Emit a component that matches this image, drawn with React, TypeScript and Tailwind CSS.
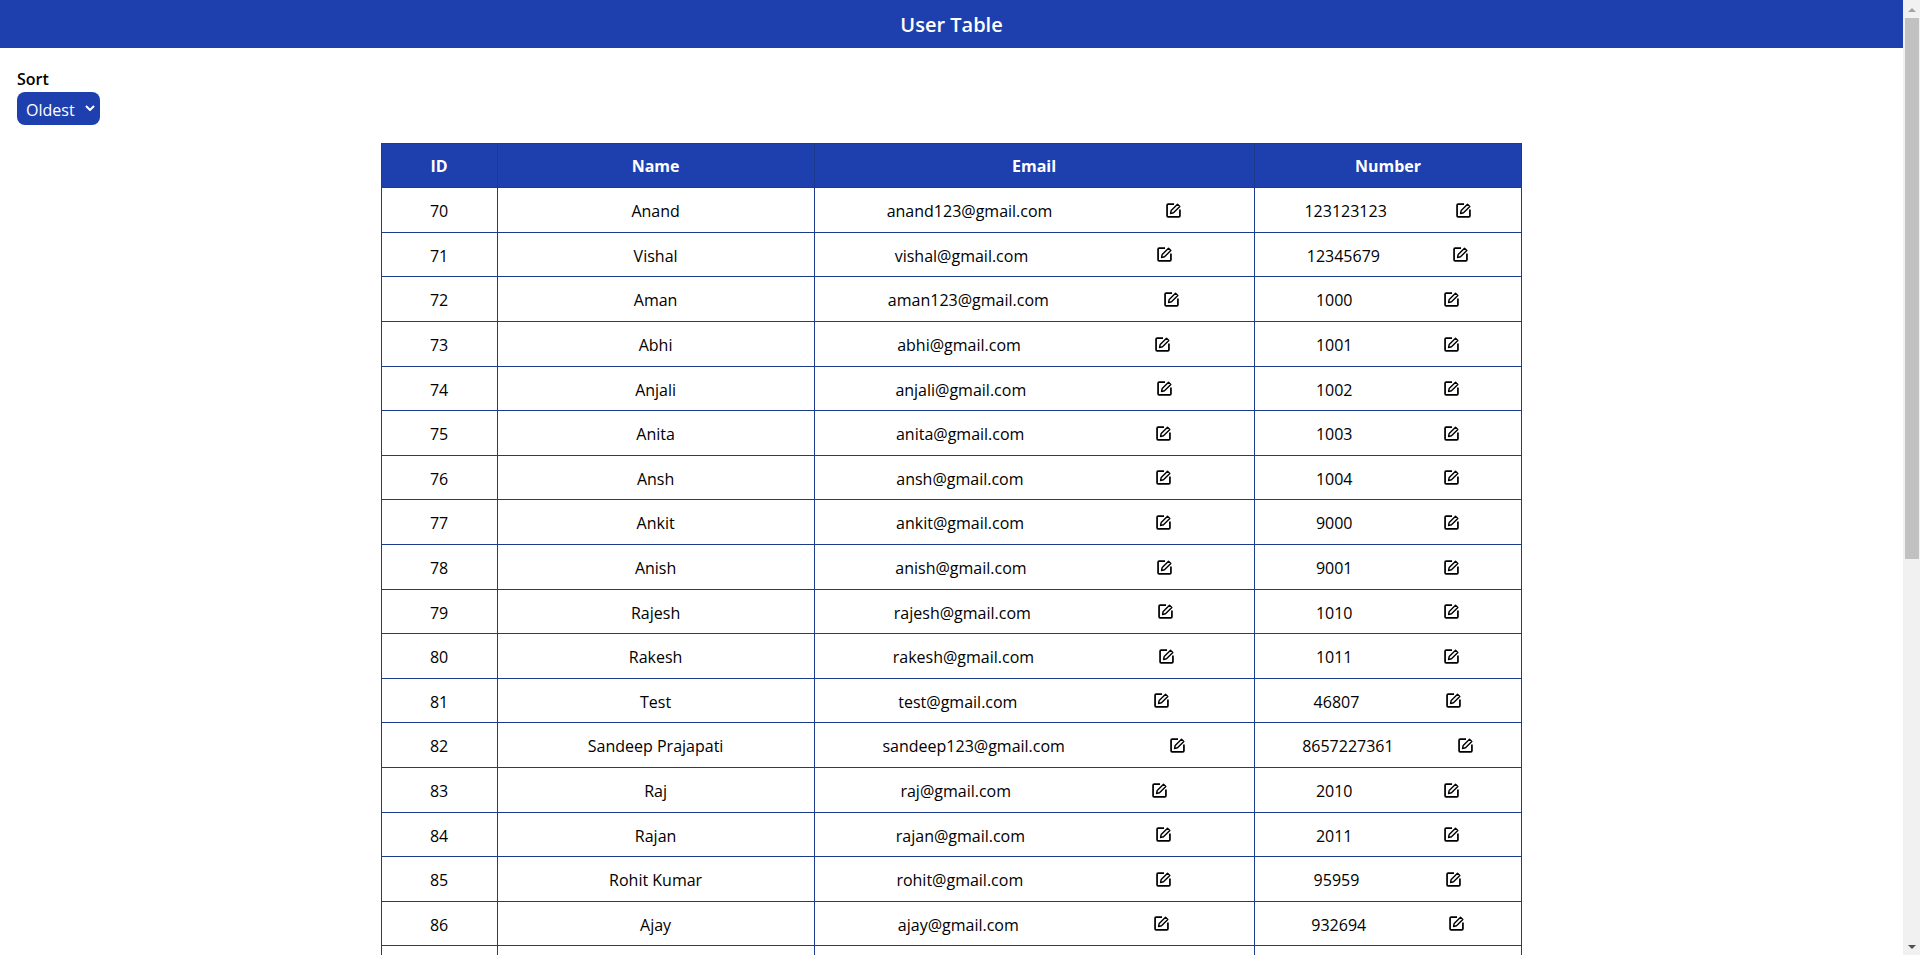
import { useState } from "react";

type User = {
  id: number;
  name: string;
  email: string;
  number: string;
};

const users: User[] = [
  { id: 70, name: "Anand", email: "anand123@gmail.com", number: "123123123" },
  { id: 71, name: "Vishal", email: "vishal@gmail.com", number: "12345679" },
  { id: 72, name: "Aman", email: "aman123@gmail.com", number: "1000" },
  { id: 73, name: "Abhi", email: "abhi@gmail.com", number: "1001" },
  { id: 74, name: "Anjali", email: "anjali@gmail.com", number: "1002" },
  { id: 75, name: "Anita", email: "anita@gmail.com", number: "1003" },
  { id: 76, name: "Ansh", email: "ansh@gmail.com", number: "1004" },
  { id: 77, name: "Ankit", email: "ankit@gmail.com", number: "9000" },
  { id: 78, name: "Anish", email: "anish@gmail.com", number: "9001" },
  { id: 79, name: "Rajesh", email: "rajesh@gmail.com", number: "1010" },
  { id: 80, name: "Rakesh", email: "rakesh@gmail.com", number: "1011" },
  { id: 81, name: "Test", email: "test@gmail.com", number: "46807" },
  { id: 82, name: "Sandeep Prajapati", email: "sandeep123@gmail.com", number: "8657227361" },
  { id: 83, name: "Raj", email: "raj@gmail.com", number: "2010" },
  { id: 84, name: "Rajan", email: "rajan@gmail.com", number: "2011" },
  { id: 85, name: "Rohit Kumar", email: "rohit@gmail.com", number: "95959" },
  { id: 86, name: "Ajay", email: "ajay@gmail.com", number: "932694" },
];

const cell = "border border-[#1e3a8a]";
const textCell = "border border-[#1e3a8a] pt-0.5";

function EditIcon() {
  return (
    <svg viewBox="0 0 28 28" className="size-[15px]" fill="none" stroke="#000" strokeLinejoin="round" aria-hidden="true">
      <path strokeWidth="3.2" d="M15 2H4a2 2 0 0 0-2 2v20a2 2 0 0 0 2 2h20a2 2 0 0 0 2-2V12" />
      <path strokeWidth="2.6" d="M8.5 19.5l1.2-5.5L21.5 2.2l4.300 4.300L14 18.300z" />
    </svg>
  );
}

function EditableCell({ value, label }: { value: string; label: string }) {
  return (
    <td className={cell}>
      <div className="flex items-center justify-around px-4">
        <span className="pt-0.5">{value}</span>
        <button type="button" aria-label={label} className="px-px">
          <EditIcon />
        </button>
      </div>
    </td>
  );
}

export default function App() {
  const [sort, setSort] = useState("oldest");

  const rows = [...users].sort((a, b) => (sort === "oldest" ? a.id - b.id : b.id - a.id));

  return (
    <div className="flex h-screen overflow-hidden bg-white font-['Open_Sans','Noto_Sans',sans-serif] text-base text-black">
      <main className="min-w-0 flex-1 overflow-hidden">
        <header className="flex h-12 items-center justify-center bg-[#1e40af] pt-0.5">
          <h1 className="text-xl font-semibold text-white">User Table</h1>
        </header>

        {/* Sort */}
        <div className="flex flex-col items-start px-[17px] pt-[18px]">
          <label htmlFor="sort" className="leading-[26px] font-semibold">
            Sort
          </label>
          <div className="relative">
            <select
              id="sort"
              value={sort}
              onChange={(e) => setSort(e.target.value)}
              className="block h-[33px] w-[83px] appearance-none rounded-lg bg-[#1e40af] pt-0.5 pl-[9px] text-white"
            >
              <option value="oldest">Oldest</option>
              <option value="newest">Newest</option>
            </select>
            <svg viewBox="0 0 10 6" className="pointer-events-none absolute top-[13px] right-[5px] w-2.5" fill="none" aria-hidden="true">
              <path d="M1 1l4 4 4-4" stroke="#fff" strokeWidth="2" />
            </svg>
          </div>
        </div>

        {/* Users */}
        <table className="mx-auto mt-[18px] w-3/5 table-fixed border-collapse text-center">
          <colgroup>
            <col className="w-[116px]" />
            <col className="w-[317px]" />
            <col className="w-[440px]" />
            <col />
          </colgroup>
          <thead>
            <tr className="h-11 bg-[#1e40af] text-white">
              <th className={cell}>ID</th>
              <th className={cell}>Name</th>
              <th className={cell}>Email</th>
              <th className={cell}>Number</th>
            </tr>
          </thead>
          <tbody>
            {rows.map((user) => (
              <tr key={user.id} className="h-[45px] nth-[5n]:h-11 nth-[5n+2]:h-11">
                <td className={textCell}>{user.id}</td>
                <td className={textCell}>{user.name}</td>
                <EditableCell value={user.email} label={`Edit email of ${user.name}`} />
                <EditableCell value={user.number} label={`Edit number of ${user.name}`} />
              </tr>
            ))}
          </tbody>
          <tfoot>
            <tr className="h-11">
              <td className={cell} />
              <td className={cell} />
              <td className={cell} />
              <td className={cell} />
            </tr>
          </tfoot>
        </table>
      </main>

      {/* Scrollbar */}
      <div className="flex w-[17px] shrink-0 flex-col items-center bg-[#f1f1f1]">
        <div className="flex h-[18px] items-center pt-0.5">
          <svg viewBox="0 0 8 4" className="w-2" fill="#a3a3a3" aria-hidden="true">
            <path d="M4 0l4 4H0z" />
          </svg>
        </div>
        <div className="h-[541px] w-[14px] bg-[#c1c1c1]" />
        <div className="mt-auto flex h-[17px] items-center">
          <svg viewBox="0 0 8 4" className="w-2" fill="#505050" aria-hidden="true">
            <path d="M0 0h8L4 4z" />
          </svg>
        </div>
      </div>
    </div>
  );
}
